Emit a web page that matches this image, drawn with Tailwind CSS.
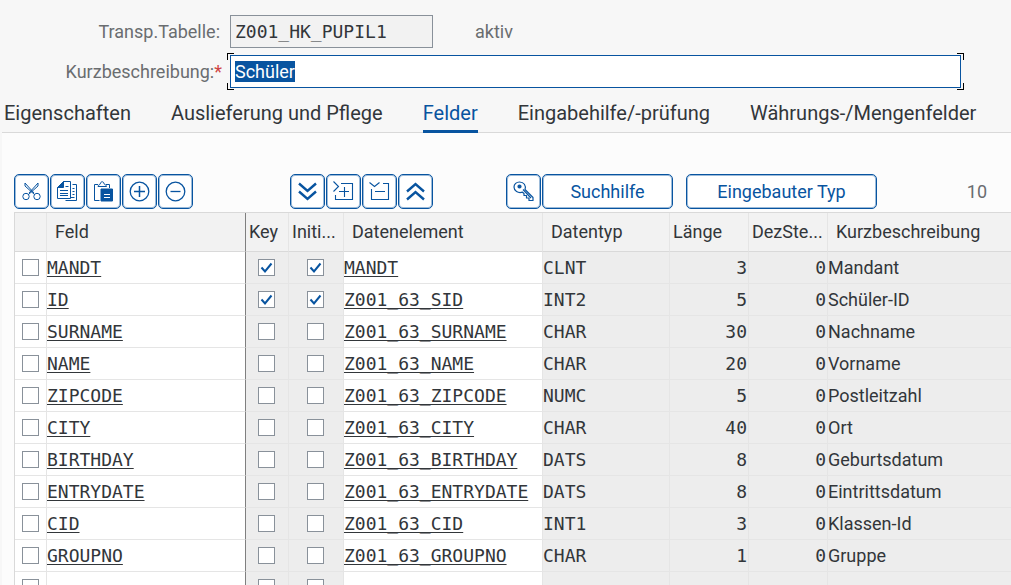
<!DOCTYPE html>
<html lang="de">
<head>
<meta charset="utf-8">
<title>Transp.Tabelle Z001_HK_PUPIL1</title>
<script src="https://cdn.jsdelivr.net/npm/@tailwindcss/browser@4"></script>
</head>
<body class="h-screen overflow-hidden flex flex-col bg-[#f7f7f7] font-['Roboto','Liberation_Sans',sans-serif] text-[18px] text-[#32363a]">

<form class="flex flex-col gap-[7px] pt-[15px]">
  <div class="flex items-center">
    <label for="tab" class="w-[220px] text-right text-[#6a6d70]">Transp.Tabelle:</label>
    <input id="tab" readonly value="Z001_HK_PUPIL1" class="ml-[10px] h-[33px] w-[203px] border border-[#89919a] bg-[#f2f2f2] px-1 font-['DejaVu_Sans_Mono',monospace] text-[#32363a] outline-none">
    <span class="ml-[42px] text-[#6a6d70]">aktiv</span>
  </div>
  <div class="flex items-center">
    <label for="desc" class="w-[222px] text-right text-[#6a6d70]">Kurzbeschreibung:<span class="text-[#d04343]">*</span></label>
    <div class="relative ml-2 mr-[50px] flex-1">
      <input id="desc" value="Schüler" autofocus class="block h-[33px] w-full border border-[#0854a0] bg-white px-1 outline-none selection:bg-[#0854a0] selection:text-white">
      <span class="absolute -left-[3px] -top-[2px] size-[7px] border-l border-t border-black"></span>
      <span class="absolute -right-[3px] -top-[2px] size-[7px] border-r border-t border-black"></span>
      <span class="absolute -left-[3px] -bottom-[2px] size-[7px] border-l border-b border-black"></span>
      <span class="absolute -right-[3px] -bottom-[2px] size-[7px] border-r border-b border-black"></span>
    </div>
  </div>
</form>

<nav class="flex gap-10 pl-1 ml-[2px] mt-[5px] h-10 whitespace-nowrap border-b border-[#d9d9d9] text-[20px] leading-[40px]">
  <a href="#" class="-ml-[2px]">Eigenschaften</a>
  <a href="#">Auslieferung und Pflege</a>
  <a href="#" class="h-10 border-b-[3px] border-[#0854a0] text-[#0854a0]">Felder</a>
  <a href="#">Eingabehilfe/-prüfung</a>
  <a href="#">Währungs-/Mengenfelder</a>
</nav>

<main class="ml-[2px] min-h-0 flex-1 bg-[#fcfcfc] pl-3 pt-[41px]">
  <div class="flex items-center text-[#0854a0]" role="toolbar">
    <div class="flex gap-px">
      <button aria-label="Ausschneiden" class="grid size-[35px] place-items-center rounded-[5px] border border-[#0854a0] bg-white ring-1 ring-inset ring-[#0854a0]/40">
        <svg width="19" height="19" viewBox="0 0 19 19" fill="none" stroke="currentColor" stroke-width="1"><path d="M3 1v3l9.500 8.500M3 1l9 10M16 1v3l-9.500 8.500M16 1l-9 10"/><circle cx="4" cy="14.500" r="3.200"/><circle cx="15" cy="14.500" r="3.200"/></svg>
      </button>
      <button aria-label="Kopieren" class="grid size-[35px] place-items-center rounded-[5px] border border-[#0854a0] bg-white ring-1 ring-inset ring-[#0854a0]/40">
        <svg width="21" height="21" viewBox="0 0 21 21" fill="none" stroke="currentColor" stroke-width="1"><path d="M6.500 .5h7v17h-13V6.500z"/><path d="M6.500 .5v6h-6z" fill="currentColor"/><path d="M3 9.500h8M3 12.500h8M3 14.500h8M8.500 5.500h3M15.500 3.500h4v16h-11M15.500 7.500h2M15.500 10.500h2M15.500 13.500h2M13.500 16.500h4"/></svg>
      </button>
      <button aria-label="Einfügen" class="grid size-[35px] place-items-center rounded-[5px] border border-[#0854a0] bg-white ring-1 ring-inset ring-[#0854a0]/40">
        <svg width="21" height="21" viewBox="0 0 21 21" fill="none" stroke="currentColor" stroke-width="1"><path d="M6.500 19.500h-5v-16H5M13 3.500h3.500V7M5 5.500h8.500c0-2-2-1.500-2.300-2.500-.5-3-3.500-3-4 0C7 4 5 3.500 5 5.500z"/><path d="M8 8h11.500v12H8z" fill="currentColor"/><path d="M11 13.500h6M11 16.500h6" stroke="white"/></svg>
      </button>
      <button aria-label="Zeile einfügen" class="grid size-[35px] place-items-center rounded-[5px] border border-[#0854a0] bg-white ring-1 ring-inset ring-[#0854a0]/40">
        <svg width="21" height="21" viewBox="0 0 21 21" fill="none" stroke="currentColor" stroke-width="1.300"><circle cx="10.500" cy="10.500" r="9.300"/><path d="M5 10.500h11M10.500 5v11" stroke-width="1.500"/></svg>
      </button>
      <button aria-label="Zeile löschen" class="grid size-[35px] place-items-center rounded-[5px] border border-[#0854a0] bg-white ring-1 ring-inset ring-[#0854a0]/40">
        <svg width="21" height="21" viewBox="0 0 21 21" fill="none" stroke="currentColor" stroke-width="1.300"><circle cx="10.500" cy="10.500" r="9.300"/><path d="M5.500 10.500h10"/></svg>
      </button>
    </div>
    <div class="ml-[97px] flex gap-px">
      <button aria-label="Alles expandieren" class="grid size-[35px] place-items-center rounded-[5px] border border-[#0854a0] bg-white ring-1 ring-inset ring-[#0854a0]/40">
        <svg width="19" height="19" viewBox="0 0 19 19" fill="none" stroke="currentColor" stroke-width="2.400"><path d="M1 1.500l8.500 7.500L18 1.500M1 9.500l8.500 7.500L18 9.500"/></svg>
      </button>
      <button aria-label="Include expandieren" class="grid size-[35px] place-items-center rounded-[5px] border border-[#0854a0] bg-white ring-1 ring-inset ring-[#0854a0]/40">
        <svg width="21" height="21" viewBox="0 0 21 21" fill="none" stroke="currentColor" stroke-width="1.100"><path d="M.5 .5l5 5-5 5M8 2.500h11.500v16h-17V14M6 10.500h10M11.500 6v10"/></svg>
      </button>
      <button aria-label="Include komprimieren" class="grid size-[35px] place-items-center rounded-[5px] border border-[#0854a0] bg-white ring-1 ring-inset ring-[#0854a0]/40">
        <svg width="21" height="21" viewBox="0 0 21 21" fill="none" stroke="currentColor" stroke-width="1.100"><path d="M.5 1.500l5 4 5-4M14 2.500h5.500v16h-17V8M6 10.500h10"/></svg>
      </button>
      <button aria-label="Alles komprimieren" class="grid size-[35px] place-items-center rounded-[5px] border border-[#0854a0] bg-white ring-1 ring-inset ring-[#0854a0]/40">
        <svg width="19" height="19" viewBox="0 0 19 19" fill="none" stroke="currentColor" stroke-width="2.400"><path d="M1 9.500L9.500 2l8.500 7.500M1 17.500L9.500 10l8.500 7.500"/></svg>
      </button>
    </div>
    <div class="ml-[73px] flex gap-px">
      <button aria-label="Schlüssel" class="grid size-[35px] place-items-center rounded-[5px] border border-[#0854a0] bg-white ring-1 ring-inset ring-[#0854a0]/40">
        <svg width="21" height="21" viewBox="0 0 21 21" fill="none" stroke="currentColor" stroke-width="1.200" stroke-linejoin="round"><path d="M12 8.500l8 8V19.500h-4v-2.500h-2.500v-2.500H11v-2l-1.500-1.300C5 12.500 1 10 1 6c0-3 2.500-5 5.500-5C11 1 13.200 4.500 12 8.500z"/><circle cx="6.500" cy="5.500" r="1.500" fill="currentColor"/><path d="M10 8.500l8 8.500"/></svg>
      </button>
      <button class="h-[35px] w-[131px] rounded-[5px] border border-[#0854a0] bg-white ring-1 ring-inset ring-[#0854a0]/40">Suchhilfe</button>
    </div>
    <button class="ml-[13px] h-[35px] w-[191px] rounded-[5px] border border-[#0854a0] bg-white ring-1 ring-inset ring-[#0854a0]/40">Eingebauter Typ</button>
    <span class="ml-auto mr-6 text-[#6a6d70]">10</span>
  </div>

  <table class="mt-[3px] w-full table-fixed border-separate border-spacing-0 border-l border-t border-[#d9d9d9]">
    <colgroup>
      <col class="w-[32px]"><col class="w-[199px]"><col class="w-[43px]"><col class="w-[55px]"><col class="w-[199px]"><col class="w-[127px]"><col class="w-[79px]"><col class="w-[79px]"><col>
    </colgroup>
    <thead>
      <tr class="h-[39px] bg-[#f2f2f2] text-left whitespace-nowrap *:border-b *:border-b-[#d9d9d9] *:pb-[2px] *:font-normal">
        <th class="border-r border-r-[#e5e5e5]"></th>
        <th class="border-r border-r-[#7f7f7f] pl-2">Feld</th>
        <th class="border-r border-r-[#e5e5e5] pl-[3px]">Key</th>
        <th class="border-r border-r-[#e5e5e5] pl-[3px]">Initi...</th>
        <th class="border-r border-r-[#e5e5e5] pl-2">Datenelement</th>
        <th class="border-r border-r-[#e5e5e5] pl-2">Datentyp</th>
        <th class="border-r border-r-[#e5e5e5] pl-[3px]">Länge</th>
        <th class="border-r border-r-[#e5e5e5] pl-[3px]">DezSte...</th>
        <th class="pl-2">Kurzbeschreibung</th>
      </tr>
    </thead>
    <tbody id="rows"></tbody>
  </table>
</main>

<script>
const fields = [
  ['MANDT', 1, 'MANDT', 'CLNT', 3, 'Mandant'],
  ['ID', 1, 'Z001_63_SID', 'INT2', 5, 'Schüler-ID'],
  ['SURNAME', 0, 'Z001_63_SURNAME', 'CHAR', 30, 'Nachname'],
  ['NAME', 0, 'Z001_63_NAME', 'CHAR', 20, 'Vorname'],
  ['ZIPCODE', 0, 'Z001_63_ZIPCODE', 'NUMC', 5, 'Postleitzahl'],
  ['CITY', 0, 'Z001_63_CITY', 'CHAR', 40, 'Ort'],
  ['BIRTHDAY', 0, 'Z001_63_BIRTHDAY', 'DATS', 8, 'Geburtsdatum'],
  ['ENTRYDATE', 0, 'Z001_63_ENTRYDATE', 'DATS', 8, 'Eintrittsdatum'],
  ['CID', 0, 'Z001_63_CID', 'INT1', 3, 'Klassen-Id'],
  ['GROUPNO', 0, 'Z001_63_GROUPNO', 'CHAR', 1, 'Gruppe'],
  ['', 0, '', '', '', '']
];
const box = (on, label) => `<label class="relative mx-auto block size-[17px]"><input type="checkbox" aria-label="${label}" ${on ? 'checked' : ''} class="peer block size-[17px] appearance-none border border-[#89919a] bg-white"><svg class="pointer-events-none absolute inset-0 hidden peer-checked:block" width="17" height="17" viewBox="0 0 17 17" fill="none" stroke="#0854a0" stroke-width="2"><path d="M3.500 8.500l3.500 4 6.500-8"/></svg></label>`;
const link = t => t ? `<a href="#" class="underline decoration-1 underline-offset-2 [text-decoration-skip-ink:none]">${t}</a>` : '';
document.getElementById('rows').innerHTML = fields.map(([f, k, d, t, l, s]) => `
  <tr class="h-8 whitespace-nowrap bg-[#ededed] font-['DejaVu_Sans_Mono',monospace] leading-5 *:border-b *:border-b-[#e5e5e5]">
    <td class="border-r border-r-[#e5e5e5] bg-white">${box(0, 'Zeile ' + f)}</td>
    <td class="border-r border-r-[#7f7f7f] bg-white">${link(f)}</td>
    <td class="border-r border-r-[#e5e5e5] pr-[2px]">${box(k, 'Key ' + f)}</td>
    <td class="border-r border-r-[#e5e5e5] pr-[2px]">${box(k, 'Initialwert ' + f)}</td>
    <td class="border-r border-r-[#e5e5e5] bg-white">${link(d)}</td>
    <td class="border-r border-r-[#e5e5e5]">${t}</td>
    <td class="border-r border-r-[#e5e5e5] pr-px text-right">${l}</td>
    <td class="border-r border-r-[#e5e5e5] pr-px text-right">${f ? 0 : ''}</td>
    <td class="font-['Roboto','Liberation_Sans',sans-serif]">${s}</td>
  </tr>`).join('');
const desc = document.getElementById('desc');
desc.focus();
desc.select();
</script>
</body>
</html>
